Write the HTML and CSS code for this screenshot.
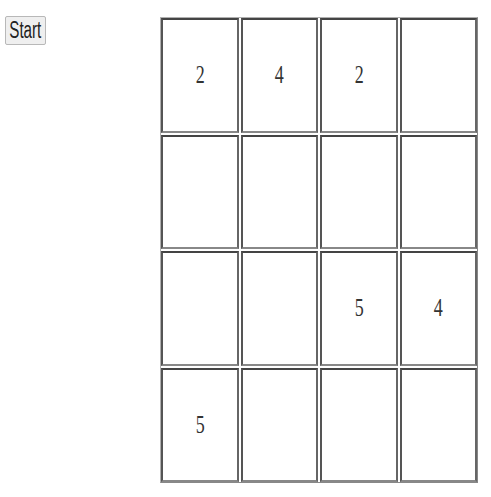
FILE: index.html
```html
<!DOCTYPE html>
<html>
<head>
<meta charset="utf-8">
<link rel="stylesheet" href="styles.css">
</head>
<body>
<div class="page">
  <button class="start"><span class="squeeze">Start</span></button>
  <div class="board">
    <div class="cell"><span class="num">2</span></div>
    <div class="cell"><span class="num">4</span></div>
    <div class="cell"><span class="num">2</span></div>
    <div class="cell"></div>
    <div class="cell"></div>
    <div class="cell"></div>
    <div class="cell"></div>
    <div class="cell"></div>
    <div class="cell"></div>
    <div class="cell"></div>
    <div class="cell"><span class="num">5</span></div>
    <div class="cell"><span class="num">4</span></div>
    <div class="cell"><span class="num">5</span></div>
    <div class="cell"></div>
    <div class="cell"></div>
    <div class="cell"></div>
  </div>
</div>
</body>
</html>
```
FILE: styles.css
```css
html, body {
  margin: 0;
  padding: 0;
  background: #fff;
}
.page {
  display: flex;
  align-items: flex-start;
  padding: 16px 0 0 5px;
}
.start {
  width: 41px;
  height: 29px;
  padding: 0;
  margin: 0;
  background: #efefef;
  border: 1px solid #b8b8b8;
  border-radius: 2px;
  font-family: "Liberation Sans", Arial, sans-serif;
  font-size: 23px;
  line-height: 27px;
  color: #222;
  overflow: hidden;
  display: flex;
  justify-content: center;
}
.squeeze {
  display: inline-block;
  transform: scaleX(0.66);
}
.board {
  margin-left: 114px;
  margin-top: 1px;
  display: grid;
  grid-template-columns: repeat(4, 77.5px);
  grid-auto-rows: 114.5px;
  gap: 2px;
  border: 1px solid;
  border-color: #b0b0b0 #888 #888 #b0b0b0;
}
.cell {
  border: 2px solid;
  border-color: #444 #666 #888 #555;
  display: flex;
  align-items: center;
  justify-content: center;
  font-family: "Liberation Serif", "Times New Roman", serif;
  font-size: 25px;
  color: #333;
}
.num {
  display: inline-block;
  transform: scaleX(0.72);
}
```
